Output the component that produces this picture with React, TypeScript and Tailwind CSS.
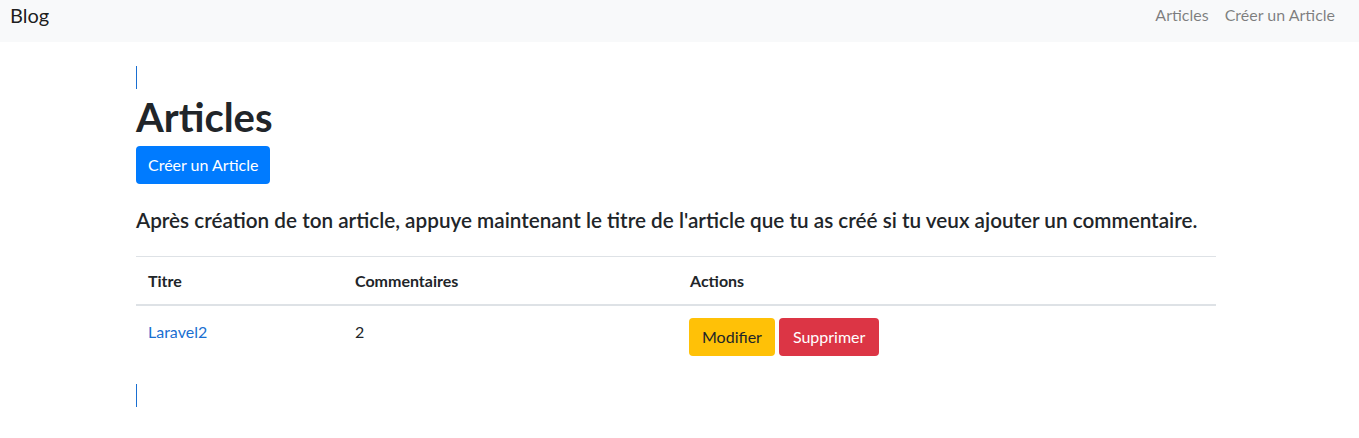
const font = { fontFamily: 'Lato, "Open Sans", sans-serif' }

export default function App() {
  return (
    <div className="min-h-[438px] bg-white text-[#212529]" style={font}>
      <nav className="flex h-[42px] items-start justify-between bg-[#f8f9fa] pl-[10px] pr-[24px] pt-[3px]">
        <a className="text-[20px] leading-[24px] text-[rgba(0,0,0,0.9)]">Blog</a>
        <div className="flex gap-[16px] pt-[2px] text-[16px] leading-[20px] text-[rgba(0,0,0,0.5)]">
          <a>Articles</a>
          <a>Créer un Article</a>
        </div>
      </nav>

      <main className="ml-[136px] w-[1080px] pt-[24px]">
        <div className="h-[23px] w-px bg-[#1a6fd1]" />
        <h1 className="mt-[4px] text-[40px] font-bold leading-[48px]">Articles</h1>
        <button className="mt-[5px] h-[38px] rounded-[4px] bg-[#007bff] px-[12px] text-[16px] text-white">
          Créer un Article
        </button>
        <h5 className="mt-[24px] text-[20.7px] font-semibold leading-[24px]">
          Après création de ton article, appuye maintenant le titre de l'article que tu as créé si tu veux ajouter un commentaire.
        </h5>

        <table className="mt-[24px] w-full border-collapse text-left text-[16px]">
          <thead>
            <tr className="border-t border-[#dee2e6]">
              <th className="w-[207px] border-b-2 border-[#dee2e6] px-[12px] pt-[12px] pb-[11px] font-bold">Titre</th>
              <th className="w-[335px] border-b-2 border-[#dee2e6] px-[12px] pt-[12px] pb-[11px] font-bold">Commentaires</th>
              <th className="border-b-2 border-[#dee2e6] px-[12px] pt-[12px] pb-[11px] font-bold">Actions</th>
            </tr>
          </thead>
          <tbody>
            <tr>
              <td className="px-[12px] pt-[14px] pb-[12px] align-top">
                <a className="text-[#1a6fd1]">Laravel2</a>
              </td>
              <td className="px-[12px] pt-[14px] pb-[12px] align-top">2</td>
              <td className="pt-[12px] pr-[12px] pb-[12px] pl-[11px] align-top">
                <div className="flex gap-[4px]">
                  <button className="h-[38px] rounded-[4px] bg-[#ffc107] px-[13px] text-[16px] text-[#212529]">Modifier</button>
                  <button className="h-[38px] rounded-[4px] bg-[#dc3545] px-[14px] text-[16px] text-white">Supprimer</button>
                </div>
              </td>
            </tr>
          </tbody>
        </table>

        <div className="mt-[16px] h-[23px] w-px bg-[#1a6fd1]" />
      </main>
    </div>
  )
}
